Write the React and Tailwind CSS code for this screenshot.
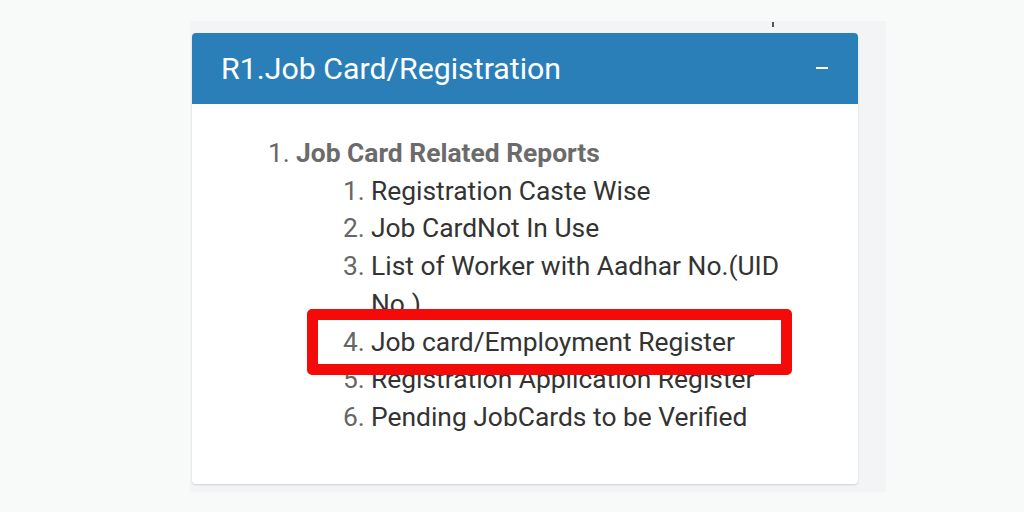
export default function App() {
  const items = [
    "Registration Caste Wise",
    "Job CardNot In Use",
    "List of Worker with Aadhar No.(UID No.)",
    "Job card/Employment Register",
    "Registration Application Register",
    "Pending JobCards to be Verified",
  ];

  return (
    <div className="h-[512px] w-[1024px] overflow-hidden bg-[#f8f9f9] font-['Roboto',sans-serif]">
      <div className="relative ml-[190px] pt-[21px]">
        <div className="absolute left-[582px] top-[22px] h-[5px] w-[2px] bg-[#555]" />
        <div className="h-[471px] w-[696px] bg-[#f2f4f6] pl-[2px] pt-[12px]">
          <div className="relative h-[451px] w-[666px] rounded-[4px] bg-white shadow-[0_1px_2px_rgba(0,0,0,0.15)]">
            <div className="flex h-[71px] items-center justify-between rounded-t-[4px] bg-[#2b7fb8] pl-[29px] pr-[30px]">
              <span className="text-[30.3px] text-white">R1.Job Card/Registration</span>
              <span className="mb-[2px] h-[2px] w-[12px] bg-white" />
            </div>
            <div className="pl-[76px] pt-[31px] text-[26.4px] leading-[37.7px]">
              <div className="flex">
                <span className="w-[28px] text-[#666]">1.</span>
                <div className="flex-1">
                  <div className="font-bold text-[#6b6b6b]">Job Card Related Reports</div>
                  <div className="pl-[47px]">
                    {items.map((t, i) => (
                      <div key={t} className="flex">
                        <span className="w-[28px] shrink-0 text-[#666]">{i + 1}.</span>
                        <span className="w-[420px] text-[#333]">{t}</span>
                      </div>
                    ))}
                  </div>
                </div>
              </div>
            </div>
            <div className="absolute left-[115px] top-[276px] h-[66px] w-[485px] rounded-[5px] border-[11px] border-[#f50a0a]" />
          </div>
        </div>
      </div>
    </div>
  );
}
